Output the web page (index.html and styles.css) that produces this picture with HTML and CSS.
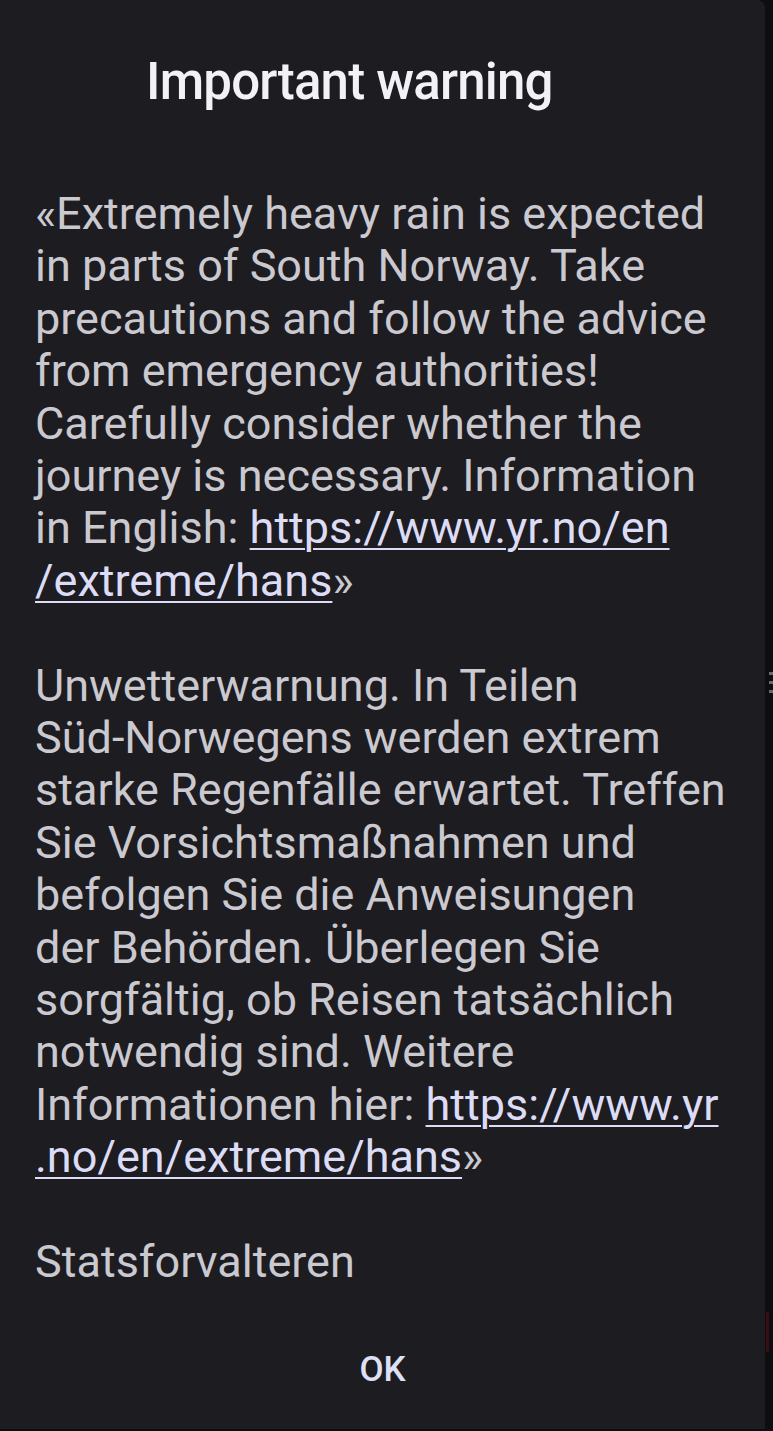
FILE: index.html
```html
<!DOCTYPE html>
<html lang="en">
<head>
<meta charset="utf-8">
<title>Important warning</title>
<link rel="stylesheet" href="styles.css">
</head>
<body>
<div class="screen">
  <section class="dialog">
    <h1 class="title">Important warning</h1>
    <div class="message">
      <p>«Extremely heavy rain is expected<br>in parts of South Norway. Take<br>precautions and follow the advice<br>from emergency authorities!<br>Carefully consider whether the<br>journey is necessary. Information<br>in English: <a class="link" href="#">https://www.yr.no/en<br>/extreme/hans</a>»</p>
      <p>Unwetterwarnung. In Teilen<br>Süd-Norwegens werden extrem<br>starke Regenfälle erwartet. Treffen<br>Sie Vorsichtsmaßnahmen und<br>befolgen Sie die Anweisungen<br>der Behörden. Überlegen Sie<br>sorgfältig, ob Reisen tatsächlich<br>notwendig sind. Weitere<br>Informationen hier: <a class="link" href="#">https://www.yr<br>.no/en/extreme/hans</a>»</p>
      <p>Statsforvalteren</p>
    </div>
    <div class="actions">
      <button class="ok" type="button">OK</button>
    </div>
  </section>
  <div class="edge-marks"><span></span><span></span><span></span></div>
  <div class="edge-red"></div>
</div>
</body>
</html>
```
FILE: styles.css
```css
html, body {
  margin: 0;
  padding: 0;
  background: #0e0e10;
}
body {
  width: 773px;
  height: 1431px;
  overflow: hidden;
  font-family: Roboto, "Noto Sans", sans-serif;
}
.screen {
  position: relative;
  width: 773px;
  height: 1431px;
}
.dialog {
  width: 765px;
  height: 1429px;
  background: #1d1c21;
  border-top-right-radius: 8px;
  box-sizing: border-box;
  display: flex;
  flex-direction: column;
}
.title {
  margin: 0;
  padding: 52px 0 0 146px;
  font-size: 51px;
  font-weight: 500;
  line-height: 60px;
  color: #f2f1f6;
  letter-spacing: -0.8px;
}
.message {
  padding: 76px 0 0 35px;
  font-size: 45px;
  line-height: 52.4px;
  color: #cbc9d0;
  white-space: nowrap;
}
.message p {
  margin: 0 0 52.4px 0;
}
.message p:last-child {
  margin-bottom: 0;
}
.link {
  color: #dcdcf6;
  text-decoration: underline;
  text-decoration-thickness: 2px;
  text-underline-offset: 5px;
}
.actions {
  display: flex;
  justify-content: center;
  padding-top: 52px;
}
.ok {
  background: none;
  border: none;
  font-family: Roboto, "Noto Sans", sans-serif;
  font-size: 35px;
  font-weight: 500;
  color: #dfe0f8;
  padding: 8px 20px;
}
.edge-marks {
  position: absolute;
  left: 769px;
  top: 672px;
  display: flex;
  flex-direction: column;
  gap: 6px;
}
.edge-marks span {
  display: block;
  width: 4px;
  height: 3px;
  background: #6a6a6e;
}
.edge-red {
  position: absolute;
  left: 766px;
  top: 1312px;
  width: 3px;
  height: 40px;
  background: #3a0d12;
}
```
